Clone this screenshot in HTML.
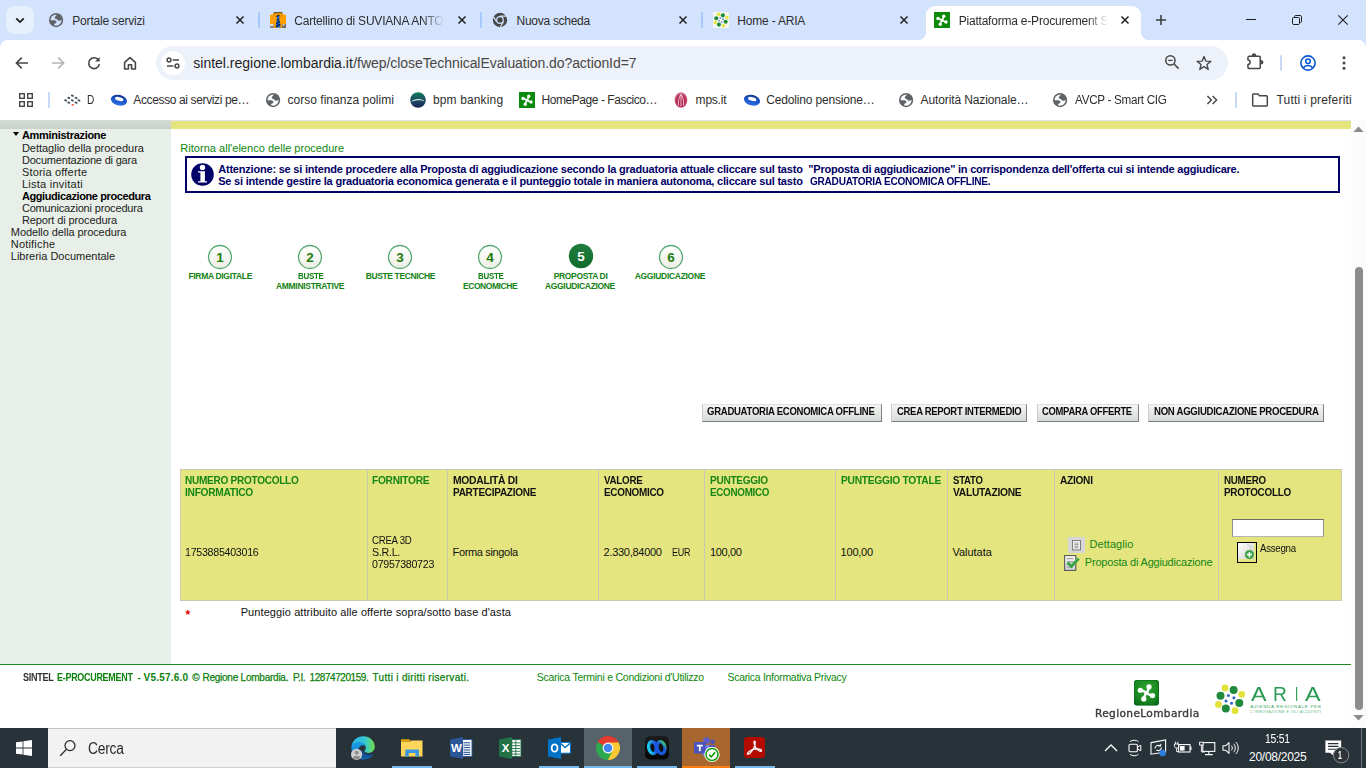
<!DOCTYPE html>
<html lang="it"><head><meta charset="utf-8"><title>Piattaforma e-Procurement Sintel</title>
<style>
html,body{margin:0;padding:0;width:1366px;height:768px;overflow:hidden;background:#fff;font-family:"Liberation Sans",sans-serif}
.a{position:absolute}
.t{position:absolute;white-space:nowrap;transform-origin:0 50%;height:20px}
svg{position:absolute;overflow:visible}
.sep{position:absolute;width:2px;height:16px;background:#a8c7fa;border-radius:1px}
.btn{position:absolute;top:404px;height:16px;background:linear-gradient(#f4f5f4,#d6dbd6);border:1px solid;border-color:#dedede #7e7e7e #7e7e7e #cbcbcb;box-shadow:0 0 0 0 #000}
.vl{position:absolute;top:470px;width:1px;height:130px;background:#c9c9b4}
.ul{position:absolute;top:766px;height:2px;background:#76b9ed}
</style></head><body>
<!-- ================= CHROME FRAME ================= -->
<div class="a" style="left:0;top:0;width:1366px;height:50px;background:#d3e3fd"></div>
<div class="a" style="left:6px;top:6px;width:28px;height:28px;border-radius:9px;background:#e7effd"></div>
<div class="sep" style="left:258px;top:12px"></div>
<div class="sep" style="left:480px;top:12px"></div>
<div class="sep" style="left:701px;top:12px"></div>
<!-- active tab -->
<div class="a" style="left:926px;top:6px;width:215px;height:36px;background:#fff;border-radius:9px 9px 0 0"></div>
<div class="a" style="left:918px;top:32px;width:8px;height:8px;background:radial-gradient(circle at 0 0,rgba(255,255,255,0) 7.5px,#fff 8.5px)"></div>
<div class="a" style="left:1141px;top:32px;width:8px;height:8px;background:radial-gradient(circle at 100% 0,rgba(255,255,255,0) 7.5px,#fff 8.5px)"></div>
<!-- toolbar -->
<div class="a" style="left:0;top:40px;width:1366px;height:80px;background:#fff;border-radius:8px 8px 0 0"></div>
<div class="a" style="left:156px;top:46px;width:1072px;height:34px;border-radius:17px;background:#edf2fa"></div>
<div class="a" style="left:161px;top:51px;width:24px;height:24px;border-radius:12px;background:#fff"></div>
<div class="a" style="left:1280px;top:55px;width:2px;height:16px;background:#c7d9f7;border-radius:1px"></div>
<div class="a" style="left:48px;top:92px;width:2px;height:16px;background:#c7d9f7;border-radius:1px"></div>
<div class="a" style="left:1235px;top:92px;width:2px;height:16px;background:#c7d9f7;border-radius:1px"></div>

<svg style="left:14px;top:14px" width="12" height="12" viewBox="0 0 12 12"><path d="M2.2 4.3L6 8.1L9.8 4.3" stroke="#1f1f1f" stroke-width="1.8" fill="none"/></svg>
<svg style="left:48.9px;top:12.9px" width="14.2" height="14.2" viewBox="0 0 14.2 14.2"><circle cx="7.1" cy="7.1" r="7.1" fill="#5f6368"/><circle cx="7.1" cy="7.1" r="5.55" fill="#d3e3fd"/><path d="M8.3 1.2L6.1 4.1Q5.7 5.2 6.6 5.5L8 5.9Q8.6 7.2 9.4 7.4L10.8 7.6Q11.8 7.4 12.3 6.6L13.4 7.1A6.3 6.3 0 0 0 8.3 1.2z" fill="#5f6368" stroke="#5f6368" stroke-width=".5" stroke-linejoin="round"/><path d="M0.9 7.5L5.6 7.4Q6.8 7.7 7.2 8.6Q7.6 9.6 6.6 10L5.4 10.4Q4.9 11 4.9 12L4.4 13A6.3 6.3 0 0 1 0.9 7.5z" fill="#5f6368" stroke="#5f6368" stroke-width=".5" stroke-linejoin="round"/></svg>
<svg style="left:235px;top:15px" width="10" height="10" viewBox="0 0 10 10"><path d="M1.5 1.5L8.5 8.5M8.5 1.5L1.5 8.5" stroke="#1f1f1f" stroke-width="1.45" fill="none"/></svg>
<svg style="left:457px;top:15px" width="10" height="10" viewBox="0 0 10 10"><path d="M1.5 1.5L8.5 8.5M8.5 1.5L1.5 8.5" stroke="#1f1f1f" stroke-width="1.45" fill="none"/></svg>
<svg style="left:678px;top:15px" width="10" height="10" viewBox="0 0 10 10"><path d="M1.5 1.5L8.5 8.5M8.5 1.5L1.5 8.5" stroke="#1f1f1f" stroke-width="1.45" fill="none"/></svg>
<svg style="left:899px;top:15px" width="10" height="10" viewBox="0 0 10 10"><path d="M1.5 1.5L8.5 8.5M8.5 1.5L1.5 8.5" stroke="#1f1f1f" stroke-width="1.45" fill="none"/></svg>
<svg style="left:1120px;top:15px" width="10" height="10" viewBox="0 0 10 10"><path d="M1.5 1.5L8.5 8.5M8.5 1.5L1.5 8.5" stroke="#1f1f1f" stroke-width="1.45" fill="none"/></svg>
<svg style="left:270px;top:12px" width="16" height="16" viewBox="0 0 16 16"><path d="M4 0.3h8l1.2 1.9L16 3v13H0V3l2.8-.8z" fill="#ffa000"/><path d="M4 0.2h8l.6 1H3.4z" fill="#3c3c3c"/><path d="M8 2.6L9.6 4.4L9 6l1.6 9.6H5.6L7 6L6.4 4.4z" fill="#0a6cf0"/><path d="M6.6 4.6L9.4 3.2M6.8 8.4L9.3 6.6M6.2 11.6L9.9 9.2M5.8 14.8L10.4 12" stroke="#101010" stroke-width="1.1"/><path d="M3.6 2.4L6.2 5M12.4 2.4L9.8 5" stroke="#b86a00" stroke-width=".8"/><path d="M3.8 12V16M12.2 12V16" stroke="#b86a00" stroke-width=".7"/><rect x="0" y="12" width="3.6" height="4" fill="#8a8a8a"/><rect x="0.2" y="12.2" width="3.2" height="1.5" fill="#fff"/><rect x="12.4" y="12" width="3.6" height="4" fill="#6a6a6a"/><rect x="12.6" y="12.2" width="2.2" height="1.3" fill="#ddd"/></svg>
<svg style="left:492px;top:12px" width="16" height="16" viewBox="0 0 16 16"><circle cx="8" cy="8" r="7.2" fill="#474747"/><circle cx="8" cy="8" r="3.9" fill="#d3e3fd"/><circle cx="8" cy="8" r="2.7" fill="#474747"/><path d="M8 4.1H14.4M4.6 9.9L1.5 4.6M11.4 9.9L8.2 15.2" stroke="#d3e3fd" stroke-width="1.1" fill="none"/></svg>
<svg style="left:713px;top:12px" width="16" height="16" viewBox="0 0 16 16"><rect width="16" height="16" fill="#f6f6ee"/><circle cx="5.55" cy="2.25" r="1.75" fill="#e6e640"/><circle cx="13.90" cy="5.45" r="1.75" fill="#e6e640"/><circle cx="2.25" cy="10.50" r="1.75" fill="#e6e640"/><circle cx="10.55" cy="13.65" r="1.75" fill="#e6e640"/><circle cx="9.85" cy="3.35" r="2.05" fill="#1f8a3c"/><circle cx="3.30" cy="6.20" r="2.05" fill="#1f8a3c"/><circle cx="12.70" cy="9.75" r="2.05" fill="#1f8a3c"/><circle cx="5.95" cy="12.60" r="2.05" fill="#1f8a3c"/><circle cx="7.25" cy="6.05" r=".8" fill="#2a62c8"/><circle cx="10.00" cy="7.15" r=".8" fill="#2a62c8"/><circle cx="6.05" cy="8.75" r=".8" fill="#2a62c8"/><circle cx="8.80" cy="9.95" r=".8" fill="#2a62c8"/></svg>
<svg style="left:934px;top:12px" width="16" height="16" viewBox="0 0 16 16"><rect width="16" height="16" fill="#0b8a0b"/><path d="M8.00 8.20Q9.38 6.52 9.73 4.21" stroke="#fff" stroke-width="1.58" fill="none"/><circle cx="9.73" cy="4.21" r="1.71" fill="#fff"/><path d="M8.00 8.20Q9.68 9.58 11.99 9.93" stroke="#fff" stroke-width="1.58" fill="none"/><circle cx="11.99" cy="9.93" r="1.71" fill="#fff"/><path d="M8.00 8.20Q6.62 9.88 6.27 12.19" stroke="#fff" stroke-width="1.58" fill="none"/><circle cx="6.27" cy="12.19" r="1.71" fill="#fff"/><path d="M8.00 8.20Q6.32 6.82 4.01 6.47" stroke="#fff" stroke-width="1.58" fill="none"/><circle cx="4.01" cy="6.47" r="1.71" fill="#fff"/><circle cx="8" cy="8.2" r="1.41" fill="#fff"/></svg>
<svg style="left:1155px;top:14px" width="12" height="12" viewBox="0 0 12 12"><path d="M6 0.9V11.1M0.9 6H11.1" stroke="#3c3c3c" stroke-width="1.55"/></svg>
<svg style="left:1246px;top:19px" width="10" height="2" viewBox="0 0 10 2"><rect x="0" y="0" width="10" height="1" fill="#1f1f1f"/></svg>
<svg style="left:1292px;top:15px" width="10" height="10" viewBox="0 0 10 10"><rect x="0.5" y="2.5" width="7" height="7" rx="1.2" fill="none" stroke="#1f1f1f" stroke-width="1"/><path d="M2.5 2.5V1.7A1.2 1.2 0 0 1 3.7 0.5H8.3A1.2 1.2 0 0 1 9.5 1.7V6.3A1.2 1.2 0 0 1 8.3 7.5H7.5" fill="none" stroke="#1f1f1f" stroke-width="1"/></svg>
<svg style="left:1338px;top:15px" width="10" height="10" viewBox="0 0 10 10"><path d="M0.3 0.3L9.7 9.7M9.7 0.3L0.3 9.7" stroke="#1f1f1f" stroke-width="1.1"/></svg>
<svg style="left:15.3px;top:56px" width="14" height="14" viewBox="0 0 14 14"><path d="M13 7H1.8M6.8 1.6L1.4 7L6.8 12.4" stroke="#474747" stroke-width="1.6" fill="none"/></svg>
<svg style="left:50.7px;top:56px" width="14" height="14" viewBox="0 0 14 14"><path d="M1 7H12.2M7.2 1.6L12.6 7L7.2 12.4" stroke="#b4b4b4" stroke-width="1.6" fill="none"/></svg>
<svg style="left:87px;top:56px" width="14" height="14" viewBox="0 0 14 14"><path d="M11.6 4.2A5.4 5.4 0 1 0 12.4 8.2" stroke="#474747" stroke-width="1.6" fill="none"/><path d="M12.6 1V5.6H8z" fill="#474747"/></svg>
<svg style="left:123px;top:56px" width="14" height="14" viewBox="0 0 14 14"><path d="M1.6 6.4L7 1.6L12.4 6.4V13H8.6V8.8H5.4V13H1.6z" stroke="#474747" stroke-width="1.6" fill="none" stroke-linejoin="round"/></svg>
<svg style="left:166px;top:57px" width="14" height="12" viewBox="0 0 14 12"><circle cx="3" cy="3" r="1.9" fill="none" stroke="#474747" stroke-width="1.5"/><path d="M6.6 3H13" stroke="#474747" stroke-width="1.5"/><circle cx="11" cy="9" r="1.9" fill="none" stroke="#474747" stroke-width="1.5"/><path d="M1 9H7.4" stroke="#474747" stroke-width="1.5"/></svg>
<svg style="left:1163.9px;top:53.9px" width="16" height="16" viewBox="0 0 16 16"><circle cx="6.4" cy="6.4" r="4.6" fill="none" stroke="#474747" stroke-width="1.5"/><path d="M9.8 9.8L14.6 14.6" stroke="#474747" stroke-width="1.6"/><path d="M4.2 6.4H8.6" stroke="#474747" stroke-width="1.3"/></svg>
<svg style="left:1196px;top:55px" width="16" height="16" viewBox="0 0 16 16"><polygon points="8.00,1.40 9.82,6.09 14.85,6.38 10.95,9.56 12.23,14.42 8.00,11.70 3.77,14.42 5.05,9.56 1.15,6.38 6.18,6.09" fill="none" stroke="#474747" stroke-width="1.4" stroke-linejoin="round"/></svg>
<svg style="left:1247px;top:53.2px" width="16" height="17" viewBox="0 0 16 17"><path d="M2.15 3.35H12.05A1.2 1.2 0 0 1 13.25 4.55V14.25A1.2 1.2 0 0 1 12.05 15.45H2.15A1.2 1.2 0 0 1 .95 14.25V11.45A2.2 2.2 0 0 0 .95 7.05V4.55A1.2 1.2 0 0 1 2.15 3.35z" fill="none" stroke="#474747" stroke-width="1.5" stroke-linejoin="round"/><path d="M4.7 3.2A2.3 2.9 0 0 1 9.3 3.2z" fill="#474747"/><path d="M13.6 7A2.7 2.25 0 0 1 13.6 11.5z" fill="#474747"/></svg>
<svg style="left:1300px;top:55px" width="16" height="16" viewBox="0 0 16 16"><circle cx="8" cy="8" r="7.1" fill="none" stroke="#0b57d0" stroke-width="1.6"/><circle cx="8" cy="6.3" r="2.3" fill="none" stroke="#0b57d0" stroke-width="1.5"/><path d="M3.4 12.9C4.6 10.9 6.2 10.4 8 10.4S11.4 10.9 12.6 12.9" fill="none" stroke="#0b57d0" stroke-width="1.5"/></svg>
<svg style="left:1342px;top:56px" width="4" height="14" viewBox="0 0 4 14"><circle cx="2" cy="1.8" r="1.5" fill="#474747"/><circle cx="2" cy="7" r="1.5" fill="#474747"/><circle cx="2" cy="12.2" r="1.5" fill="#474747"/></svg>
<svg style="left:19px;top:93px" width="14" height="14" viewBox="0 0 14 14"><rect x="0.7" y="0.7" width="4.6" height="4.6" fill="none" stroke="#474747" stroke-width="1.4"/><rect x="8.7" y="0.7" width="4.6" height="4.6" fill="none" stroke="#474747" stroke-width="1.4"/><rect x="0.7" y="8.7" width="4.6" height="4.6" fill="none" stroke="#474747" stroke-width="1.4"/><rect x="8.7" y="8.7" width="4.6" height="4.6" fill="none" stroke="#474747" stroke-width="1.4"/></svg>
<svg style="left:64px;top:92px" width="16" height="16" viewBox="0 0 16 16"><ellipse cx="8.4" cy="3.6000000000000005" rx="1.55" ry="1.05" transform="rotate(25 8.4 3.6000000000000005)" fill="#46525e"/><ellipse cx="4.8" cy="5.9" rx="1.55" ry="1.05" transform="rotate(25 4.8 5.9)" fill="#46525e"/><ellipse cx="12.1" cy="5.9" rx="1.55" ry="1.05" transform="rotate(25 12.1 5.9)" fill="#46525e"/><ellipse cx="1.5999999999999996" cy="8.4" rx="1.55" ry="1.05" transform="rotate(25 1.5999999999999996 8.4)" fill="#46525e"/><ellipse cx="8.4" cy="8.4" rx="1.55" ry="1.05" transform="rotate(25 8.4 8.4)" fill="#46525e"/><ellipse cx="15" cy="8.4" rx="1.55" ry="1.05" transform="rotate(25 15 8.4)" fill="#46525e"/><ellipse cx="4.8" cy="10.600000000000001" rx="1.55" ry="1.05" transform="rotate(25 4.8 10.600000000000001)" fill="#46525e"/><ellipse cx="12.1" cy="10.600000000000001" rx="1.55" ry="1.05" transform="rotate(25 12.1 10.600000000000001)" fill="#46525e"/><ellipse cx="8.7" cy="12.8" rx="1.3" ry=".9" fill="#f0562c"/></svg>
<svg style="left:111px;top:92px" width="16" height="16" viewBox="0 0 16 16"><defs><linearGradient id="bkb111" x1="0" y1="0" x2="0" y2="1"><stop offset="0" stop-color="#0b2f86"/><stop offset=".45" stop-color="#1a55cc"/><stop offset="1" stop-color="#2f6ee0"/></linearGradient></defs><g transform="rotate(14 8 8)"><ellipse cx="8" cy="8.2" rx="8.3" ry="5.3" fill="url(#bkb111)"/><ellipse cx="8" cy="7" rx="4.3" ry="1.9" fill="#fff"/></g></svg>
<svg style="left:266.0px;top:92.9px" width="14.2" height="14.2" viewBox="0 0 14.2 14.2"><circle cx="7.1" cy="7.1" r="7.1" fill="#5f6368"/><circle cx="7.1" cy="7.1" r="5.55" fill="#fff"/><path d="M8.3 1.2L6.1 4.1Q5.7 5.2 6.6 5.5L8 5.9Q8.6 7.2 9.4 7.4L10.8 7.6Q11.8 7.4 12.3 6.6L13.4 7.1A6.3 6.3 0 0 0 8.3 1.2z" fill="#5f6368" stroke="#5f6368" stroke-width=".5" stroke-linejoin="round"/><path d="M0.9 7.5L5.6 7.4Q6.8 7.7 7.2 8.6Q7.6 9.6 6.6 10L5.4 10.4Q4.9 11 4.9 12L4.4 13A6.3 6.3 0 0 1 0.9 7.5z" fill="#5f6368" stroke="#5f6368" stroke-width=".5" stroke-linejoin="round"/></svg>
<svg style="left:410px;top:92px" width="16" height="16" viewBox="0 0 16 16"><defs><linearGradient id="bpmg" x1="0" y1="0" x2="0" y2="1"><stop offset="0" stop-color="#0e7a5a"/><stop offset=".55" stop-color="#1c4a63"/><stop offset="1" stop-color="#1b2458"/></linearGradient></defs><circle cx="8" cy="8" r="7.8" fill="url(#bpmg)"/><path d="M1.2 9.8C4.5 6.2 11 6 14.8 9.4C11 7.6 5 8 1.2 9.8z" fill="#e8f2f0"/></svg>
<svg style="left:519px;top:92px" width="16" height="16" viewBox="0 0 16 16"><rect width="16" height="16" fill="#0b8a0b"/><path d="M8.00 8.20Q9.38 6.52 9.73 4.21" stroke="#fff" stroke-width="1.58" fill="none"/><circle cx="9.73" cy="4.21" r="1.71" fill="#fff"/><path d="M8.00 8.20Q9.68 9.58 11.99 9.93" stroke="#fff" stroke-width="1.58" fill="none"/><circle cx="11.99" cy="9.93" r="1.71" fill="#fff"/><path d="M8.00 8.20Q6.62 9.88 6.27 12.19" stroke="#fff" stroke-width="1.58" fill="none"/><circle cx="6.27" cy="12.19" r="1.71" fill="#fff"/><path d="M8.00 8.20Q6.32 6.82 4.01 6.47" stroke="#fff" stroke-width="1.58" fill="none"/><circle cx="4.01" cy="6.47" r="1.71" fill="#fff"/><circle cx="8" cy="8.2" r="1.41" fill="#fff"/></svg>
<svg style="left:674px;top:92px" width="14" height="16" viewBox="0 0 14 16"><defs><radialGradient id="mpsg" cx=".5" cy=".55" r=".6"><stop offset="0" stop-color="#a81840"/><stop offset=".6" stop-color="#b8305a"/><stop offset="1" stop-color="#dc98ac"/></radialGradient></defs><ellipse cx="7" cy="8" rx="6.4" ry="7.7" fill="url(#mpsg)"/><path d="M7 2.2V14M4.4 13.4C4.2 9 5 5 7 2.4C9 5 9.8 9 9.6 13.4" stroke="#f3d3dc" stroke-width=".9" fill="none"/></svg>
<svg style="left:744px;top:92px" width="16" height="16" viewBox="0 0 16 16"><defs><linearGradient id="bkb744" x1="0" y1="0" x2="0" y2="1"><stop offset="0" stop-color="#0b2f86"/><stop offset=".45" stop-color="#1a55cc"/><stop offset="1" stop-color="#2f6ee0"/></linearGradient></defs><g transform="rotate(14 8 8)"><ellipse cx="8" cy="8.2" rx="8.3" ry="5.3" fill="url(#bkb744)"/><ellipse cx="8" cy="7" rx="4.3" ry="1.9" fill="#fff"/></g></svg>
<svg style="left:899.0px;top:92.9px" width="14.2" height="14.2" viewBox="0 0 14.2 14.2"><circle cx="7.1" cy="7.1" r="7.1" fill="#5f6368"/><circle cx="7.1" cy="7.1" r="5.55" fill="#fff"/><path d="M8.3 1.2L6.1 4.1Q5.7 5.2 6.6 5.5L8 5.9Q8.6 7.2 9.4 7.4L10.8 7.6Q11.8 7.4 12.3 6.6L13.4 7.1A6.3 6.3 0 0 0 8.3 1.2z" fill="#5f6368" stroke="#5f6368" stroke-width=".5" stroke-linejoin="round"/><path d="M0.9 7.5L5.6 7.4Q6.8 7.7 7.2 8.6Q7.6 9.6 6.6 10L5.4 10.4Q4.9 11 4.9 12L4.4 13A6.3 6.3 0 0 1 0.9 7.5z" fill="#5f6368" stroke="#5f6368" stroke-width=".5" stroke-linejoin="round"/></svg>
<svg style="left:1052.9px;top:92.9px" width="14.2" height="14.2" viewBox="0 0 14.2 14.2"><circle cx="7.1" cy="7.1" r="7.1" fill="#5f6368"/><circle cx="7.1" cy="7.1" r="5.55" fill="#fff"/><path d="M8.3 1.2L6.1 4.1Q5.7 5.2 6.6 5.5L8 5.9Q8.6 7.2 9.4 7.4L10.8 7.6Q11.8 7.4 12.3 6.6L13.4 7.1A6.3 6.3 0 0 0 8.3 1.2z" fill="#5f6368" stroke="#5f6368" stroke-width=".5" stroke-linejoin="round"/><path d="M0.9 7.5L5.6 7.4Q6.8 7.7 7.2 8.6Q7.6 9.6 6.6 10L5.4 10.4Q4.9 11 4.9 12L4.4 13A6.3 6.3 0 0 1 0.9 7.5z" fill="#5f6368" stroke="#5f6368" stroke-width=".5" stroke-linejoin="round"/></svg>
<svg style="left:1206px;top:95px" width="12" height="10" viewBox="0 0 12 10"><path d="M1.4 1L5.4 5L1.4 9M6.6 1L10.6 5L6.6 9" stroke="#474747" stroke-width="1.5" fill="none"/></svg>
<svg style="left:1252px;top:93px" width="16" height="14" viewBox="0 0 16 14"><path d="M1.6 0.9H6L7.6 2.7H14.4A1.1 1.1 0 0 1 15.3 3.7V12A1.1 1.1 0 0 1 14.4 13.1H1.6A1.1 1.1 0 0 1 .7 12V1.9A1.1 1.1 0 0 1 1.6 .9z" fill="none" stroke="#474747" stroke-width="1.5" stroke-linejoin="round"/></svg>
<!-- ================= PAGE ================= -->
<div class="a" style="left:0;top:120px;width:171px;height:544px;background:#e8efe8"></div>
<div class="a" style="left:0;top:120px;width:171px;height:9px;background:linear-gradient(#d4dbd4,#c9d1c9)"></div>
<div class="a" style="left:171px;top:121px;width:1180px;height:8px;background:#e4e57f"></div>
<div class="a" style="left:171px;top:120px;width:1195px;height:1px;background:#e3e3ec"></div>
<!-- scrollbar -->
<div class="a" style="left:1351px;top:120px;width:15px;height:608px;background:#fcfcfc"></div>
<div class="a" style="left:1354.5px;top:267px;width:8.5px;height:443px;border-radius:4.5px;background:#8c8c8c"></div>
<svg style="left:1353px;top:126px" width="11" height="6" viewBox="0 0 11 6"><path d="M0.3 6 L5.5 0.6 L10.7 6Z" fill="#8b8b8b"/></svg>
<svg style="left:1353px;top:715px" width="11" height="6" viewBox="0 0 11 6"><path d="M0.3 0 L5.5 5.4 L10.7 0Z" fill="#8b8b8b"/></svg>
<!-- info box -->
<div class="a" style="left:185px;top:156px;width:1151px;height:33px;border:2px solid #000066;background:#fff"></div>
<!-- stepper -->
<svg style="left:207.3px;top:244.3px" width="26" height="26" viewBox="0 0 26 26"><defs><linearGradient id="stw1" x1="0" y1="0" x2="0" y2="1"><stop offset="0" stop-color="#ffffff"/><stop offset="1" stop-color="#eeeee6"/></linearGradient></defs><circle cx="13" cy="13" r="11.5" fill="url(#stw1)" stroke="#55a870" stroke-width="1.3"/><text x="13" y="17.8" text-anchor="middle" font-family="Liberation Sans, sans-serif" font-weight="700" font-size="13.5" fill="#1c7c0c">1</text></svg>
<svg style="left:297.36px;top:244.3px" width="26" height="26" viewBox="0 0 26 26"><defs><linearGradient id="stw2" x1="0" y1="0" x2="0" y2="1"><stop offset="0" stop-color="#ffffff"/><stop offset="1" stop-color="#eeeee6"/></linearGradient></defs><circle cx="13" cy="13" r="11.5" fill="url(#stw2)" stroke="#55a870" stroke-width="1.3"/><text x="13" y="17.8" text-anchor="middle" font-family="Liberation Sans, sans-serif" font-weight="700" font-size="13.5" fill="#1c7c0c">2</text></svg>
<svg style="left:387.42px;top:244.3px" width="26" height="26" viewBox="0 0 26 26"><defs><linearGradient id="stw3" x1="0" y1="0" x2="0" y2="1"><stop offset="0" stop-color="#ffffff"/><stop offset="1" stop-color="#eeeee6"/></linearGradient></defs><circle cx="13" cy="13" r="11.5" fill="url(#stw3)" stroke="#55a870" stroke-width="1.3"/><text x="13" y="17.8" text-anchor="middle" font-family="Liberation Sans, sans-serif" font-weight="700" font-size="13.5" fill="#1c7c0c">3</text></svg>
<svg style="left:477.48px;top:244.3px" width="26" height="26" viewBox="0 0 26 26"><defs><linearGradient id="stw4" x1="0" y1="0" x2="0" y2="1"><stop offset="0" stop-color="#ffffff"/><stop offset="1" stop-color="#eeeee6"/></linearGradient></defs><circle cx="13" cy="13" r="11.5" fill="url(#stw4)" stroke="#55a870" stroke-width="1.3"/><text x="13" y="17.8" text-anchor="middle" font-family="Liberation Sans, sans-serif" font-weight="700" font-size="13.5" fill="#1c7c0c">4</text></svg>
<svg style="left:567.54px;top:242.8px" width="26" height="26" viewBox="0 0 26 26"><defs><linearGradient id="stg" x1="0" y1="0" x2="0" y2="1"><stop offset="0" stop-color="#1f7f3f"/><stop offset="1" stop-color="#0f6a2c"/></linearGradient></defs><circle cx="13" cy="13" r="12.2" fill="url(#stg)"/><text x="13" y="17.8" text-anchor="middle" font-family="Liberation Sans, sans-serif" font-weight="700" font-size="13.5" fill="#fff">5</text></svg>
<svg style="left:657.6px;top:244.3px" width="26" height="26" viewBox="0 0 26 26"><defs><linearGradient id="stw6" x1="0" y1="0" x2="0" y2="1"><stop offset="0" stop-color="#ffffff"/><stop offset="1" stop-color="#eeeee6"/></linearGradient></defs><circle cx="13" cy="13" r="11.5" fill="url(#stw6)" stroke="#55a870" stroke-width="1.3"/><text x="13" y="17.8" text-anchor="middle" font-family="Liberation Sans, sans-serif" font-weight="700" font-size="13.5" fill="#1c7c0c">6</text></svg>
<!-- buttons -->
<div class="btn" style="left:702px;width:178px"></div>
<div class="btn" style="left:891px;width:134px"></div>
<div class="btn" style="left:1037px;width:100px"></div>
<div class="btn" style="left:1148px;width:174px"></div>
<!-- table -->
<div class="a" style="left:180px;top:469px;width:1160px;height:130px;background:#e4e57f;border:1px solid #c9c9b4"></div>
<div class="vl" style="left:367px"></div><div class="vl" style="left:447px"></div><div class="vl" style="left:598px"></div>
<div class="vl" style="left:704px"></div><div class="vl" style="left:835px"></div><div class="vl" style="left:947px"></div>
<div class="vl" style="left:1054px"></div><div class="vl" style="left:1218px"></div>
<div class="a" style="left:1232px;top:519px;width:90px;height:16px;background:#fff;border:1px solid;border-color:#6e6e6e #8f8f8f #b5b5b5 #8f8f8f"></div>
<svg style="left:13px;top:132.3px" width="6" height="4" viewBox="0 0 6 4"><path d="M0 0H6L3 4z" fill="#000"/></svg>
<svg style="left:191.0px;top:162.5px" width="23" height="23" viewBox="0 0 23 23"><circle cx="11.5" cy="11.5" r="11.3" fill="#000066"/><circle cx="11.5" cy="4.4" r="2.7" fill="#fff"/><path d="M7 8.2H13.9V18.2H16V19.6H7V18.2H9.4V9.6H7z" fill="#fff"/></svg>
<svg style="left:1068px;top:537px" width="17" height="16" viewBox="0 0 17 16"><rect width="17" height="16" fill="#d6d6d6"/><rect x="4.5" y="3.5" width="8" height="9.4" fill="#f4f4f4" stroke="#7c7c7c" stroke-width="1"/><path d="M6.4 6H10.6M6.4 7.6H10.6M6.4 9.2H10.6M6.4 10.8H10.6" stroke="#8e8e8e" stroke-width=".9"/></svg>
<svg style="left:1064px;top:555px" width="16" height="16" viewBox="0 0 16 16"><defs><linearGradient id="dcg" x1="0" y1="0" x2="0" y2="1"><stop offset="0" stop-color="#fdfdfd"/><stop offset="1" stop-color="#cfcfcf"/></linearGradient></defs><rect x="0.6" y="0.6" width="11.2" height="14.8" fill="url(#dcg)" stroke="#5a5a5a" stroke-width="1.1"/><path d="M2.6 3.6H9.6M2.6 6.6H9.6M2.6 9.4H7M2.6 12H9" stroke="#a8a8a8" stroke-width="1.3"/><path d="M3.6 7.6L7.4 11.2L14.6 3.4" stroke="#2f9e3f" stroke-width="3" fill="none"/><path d="M4 7.2L7.4 10.2L13.8 3.2" stroke="#5fc06a" stroke-width=".9" fill="none"/></svg>
<svg style="left:1237px;top:542px" width="20" height="21" viewBox="0 0 20 21"><defs><linearGradient id="asg" x1="0" y1="0" x2="1" y2="1"><stop offset="0" stop-color="#ffffff"/><stop offset="1" stop-color="#cfcfcf"/></linearGradient></defs><rect x="0.5" y="0.5" width="19" height="20" fill="#e4e57f" stroke="#000" stroke-width="1"/><rect x="1" y="1" width="16" height="16" fill="url(#asg)"/><path d="M10 2.4H11.6L13.6 4.4V8" stroke="#c2c2c2" stroke-width=".8" fill="none"/><circle cx="12.4" cy="12.6" r="4.1" fill="#3aa742"/><circle cx="12.4" cy="12.6" r="4.1" fill="none" stroke="#2b8a35" stroke-width=".6"/><path d="M12.4 10V15.2M9.8 12.6H15" stroke="#fff" stroke-width="1.5"/></svg>
<svg style="left:1134px;top:680.4px" width="25" height="25" viewBox="0 0 25 25"><defs><radialGradient id="llg" cx=".5" cy=".35" r=".75"><stop offset="0" stop-color="#2fa32f"/><stop offset=".6" stop-color="#1a8a22"/><stop offset="1" stop-color="#0a6a1a"/></radialGradient></defs><rect width="25" height="25.4" rx="2.6" fill="url(#llg)"/><rect x=".5" y=".5" width="24" height="24.4" rx="2.2" fill="none" stroke="#0a6a1a" stroke-opacity=".55" stroke-width="1"/><path d="M12.40 12.90Q14.51 10.34 15.04 6.82" stroke="#fff" stroke-width="2.40" fill="none"/><circle cx="15.04" cy="6.82" r="2.61" fill="#fff"/><path d="M12.40 12.90Q14.96 15.01 18.48 15.54" stroke="#fff" stroke-width="2.40" fill="none"/><circle cx="18.48" cy="15.54" r="2.61" fill="#fff"/><path d="M12.40 12.90Q10.29 15.46 9.76 18.98" stroke="#fff" stroke-width="2.40" fill="none"/><circle cx="9.76" cy="18.98" r="2.61" fill="#fff"/><path d="M12.40 12.90Q9.84 10.79 6.32 10.26" stroke="#fff" stroke-width="2.40" fill="none"/><circle cx="6.32" cy="10.26" r="2.61" fill="#fff"/><circle cx="12.4" cy="12.9" r="2.15" fill="#fff"/></svg>
<svg style="left:1212px;top:682px" width="36" height="34" viewBox="0 0 36 34"><circle cx="13.0" cy="5.9" r="3.4" fill="#e2e23a"/><circle cx="29.7" cy="12.3" r="3.4" fill="#e2e23a"/><circle cx="6.4" cy="22.4" r="3.4" fill="#e2e23a"/><circle cx="23.0" cy="28.7" r="3.4" fill="#e2e23a"/><circle cx="21.6" cy="8.1" r="4" fill="#1f8a3c"/><circle cx="8.5" cy="13.8" r="4" fill="#1f8a3c"/><circle cx="27.3" cy="20.9" r="4" fill="#1f8a3c"/><circle cx="13.8" cy="26.6" r="4" fill="#1f8a3c"/><circle cx="16.4" cy="13.5" r="1.5" fill="#2a62c8"/><circle cx="21.9" cy="15.7" r="1.5" fill="#2a62c8"/><circle cx="14.0" cy="18.9" r="1.5" fill="#2a62c8"/><circle cx="19.5" cy="21.3" r="1.5" fill="#2a62c8"/></svg>
<!-- footer -->
<div class="a" style="left:0;top:664px;width:1351px;height:1px;background:#1d8a1d"></div>
<!-- ================= TASKBAR ================= -->
<div class="a" style="left:0;top:728px;width:1366px;height:40px;background:#273239"></div>
<div class="a" style="left:48px;top:728px;width:288px;height:40px;background:#f2f2f2;box-sizing:border-box;border-top:1px solid #c4c4c4;border-bottom:1px solid #cfcfcf"></div>
<div class="a" style="left:584px;top:728px;width:48px;height:40px;background:#56636a"></div>
<div class="a" style="left:682px;top:728px;width:48px;height:40px;background:#a7672f"></div>
<div class="ul" style="left:392px;width:40px"></div>
<div class="ul" style="left:539px;width:40px"></div>
<div class="ul" style="left:584px;width:48px"></div>
<div class="ul" style="left:637px;width:40px"></div>
<div class="ul" style="left:682px;width:48px;background:#ff7f0e"></div>
<div class="ul" style="left:735px;width:40px"></div>
<div class="a" style="left:1361px;top:728px;width:1px;height:40px;background:#6a747a"></div>
<svg style="left:16px;top:740px" width="16" height="16" viewBox="0 0 16 16"><path d="M0 2.3L6.6 1.4V7.6H0zM7.4 1.3L16 0V7.6H7.4zM0 8.4H6.6V14.6L0 13.7zM7.4 8.4H16V16L7.4 14.7z" fill="#fff"/></svg>
<svg style="left:59px;top:738.6px" width="18" height="18" viewBox="0 0 18 18"><circle cx="11" cy="6.6" r="5" fill="none" stroke="#222" stroke-width="1.2"/><path d="M7.4 10.4L1.2 16.8" stroke="#222" stroke-width="1.3"/></svg>
<svg style="left:351px;top:735.6px" width="24" height="24" viewBox="0 0 24 24"><defs><linearGradient id="eg1" x1="0" y1="0" x2="1" y2="0"><stop offset="0" stop-color="#29b6f0"/><stop offset=".6" stop-color="#37c8d0"/><stop offset="1" stop-color="#70e048"/></linearGradient><linearGradient id="eg2" x1="0" y1="0" x2="0" y2="1"><stop offset="0" stop-color="#1b9de2"/><stop offset="1" stop-color="#1377cf"/></linearGradient><linearGradient id="eg3" x1="0" y1="0" x2="1" y2="0"><stop offset="0" stop-color="#0c59a4"/><stop offset="1" stop-color="#114a8b"/></linearGradient></defs><path d="M0.4 11.2C0.9 4.8 6 0.2 12.2 0.2C19 0.2 23.8 5.2 23.8 10.6C23.8 14.6 20.8 17 17.6 17C15.2 17 13.6 16 13.6 15C13.6 14.2 14.8 13.6 14.8 11.6C14.8 9.4 12.6 7 9.2 7C5 7 1.2 9 0.4 11.2z" fill="url(#eg1)"/><path d="M0.4 11.6C0.6 8 4.4 6 8.6 6C11.6 6 14 7.8 14.6 10C12.4 8.6 8.6 9.4 7.6 12.8C6.6 16.6 9 21 14 23.2C7.2 24.6 0 19.4 0.4 11.6z" fill="url(#eg2)"/><path d="M7.4 13.6C7 17.6 10.6 21.6 15.4 21.6C18.6 21.6 21.4 20 22.6 17.4C22 17.2 20.4 19 16.8 18.6C13.6 18.2 12 16.6 12.6 15C10.8 15.4 8 15 7.4 13.6z" fill="url(#eg3)"/><path d="M14 23.3C17.8 23 21.2 20.6 22.6 17.4C20 20.6 15 21.4 11.6 19.8C12 21.4 12.8 22.6 14 23.3z" fill="#0f5fae"/><circle cx="5.6" cy="18.4" r="5.6" fill="#cfcfcf"/><circle cx="5.6" cy="16.6" r="2.1" fill="#8f8f8f"/><path d="M1.8 21.4C2.4 19.2 8.8 19.2 9.4 21.4C8.4 23 6.8 23.6 5.6 23.6S2.8 23 1.8 21.4z" fill="#8f8f8f"/></svg>
<svg style="left:400.95px;top:738.8000000000001px" width="21.5" height="18" viewBox="0 0 21.5 18"><path d="M0 0.2H8.6L9.8 2.8H0z" fill="#e5a50a"/><path d="M0 2.7H9.2L10.2 1.5H21.5V17.6H0z" fill="#ffd65c"/><path d="M4.2 17.6V11.4A1 1 0 0 1 5.2 10.4H17A1 1 0 0 1 18 11.4V17.6H14.4V14H7.8V17.6z" fill="#3c97de"/></svg>
<svg style="left:449.8px;top:736.7px" width="22.4" height="22" viewBox="0 0 22.4 22"><rect x="11" y="2.6" width="11" height="16.8" fill="#fff"/><rect x="13.4" y="5.2" width="6.8" height="1.1" fill="#2b579a"/><rect x="13.4" y="7.6" width="6.8" height="1.1" fill="#2b579a"/><rect x="13.4" y="10" width="6.8" height="1.1" fill="#2b579a"/><rect x="13.4" y="12.4" width="6.8" height="1.1" fill="#2b579a"/><rect x="13.4" y="14.8" width="6.8" height="1.1" fill="#2b579a"/><rect x="13.4" y="16.9" width="6.8" height="1.1" fill="#2b579a"/><rect x="11" y="2.6" width="11" height="16.8" fill="none" stroke="#2b579a" stroke-width=".9"/><path d="M0 2.4L13 0V22L0 19.6z" fill="#2b579a"/><text x="6.5" y="15.2" text-anchor="middle" font-family="Liberation Sans, sans-serif" font-weight="700" font-size="11.5" fill="#fff">W</text></svg>
<svg style="left:498.8px;top:736.7px" width="22.4" height="22" viewBox="0 0 22.4 22"><rect x="11" y="2.6" width="11" height="16.8" fill="#fff"/><rect x="12" y="5.4" width="9.4" height=".9" fill="#217346"/><rect x="12" y="8.2" width="9.4" height=".9" fill="#217346"/><rect x="12" y="11" width="9.4" height=".9" fill="#217346"/><rect x="12" y="13.8" width="9.4" height=".9" fill="#217346"/><rect x="12" y="16.6" width="9.4" height=".9" fill="#217346"/><rect x="16.4" y="3" width=".9" height="16" fill="#217346"/><rect x="13" y="3" width=".5" height="16" fill="#217346" opacity=".5"/><rect x="11" y="2.6" width="11" height="16.8" fill="none" stroke="#217346" stroke-width=".9"/><path d="M0 2.4L13 0V22L0 19.6z" fill="#217346"/><text x="6.5" y="15.2" text-anchor="middle" font-family="Liberation Sans, sans-serif" font-weight="700" font-size="11.5" fill="#fff">X</text></svg>
<svg style="left:547.8px;top:736.7px" width="22.4" height="22" viewBox="0 0 22.4 22"><rect x="12" y="5.4" width="10.4" height="10.8" fill="#fff" stroke="#0072c6" stroke-width="1"/><path d="M12.4 6.2L17.2 10.6L22 6.2" stroke="#0072c6" stroke-width="1.3" fill="none"/><path d="M0 2.4L13 0V22L0 19.6z" fill="#0072c6"/><ellipse cx="6.6" cy="11" rx="2.9" ry="3.7" fill="none" stroke="#fff" stroke-width="1.8"/></svg>
<svg style="left:596px;top:735.8px" width="24" height="24" viewBox="0 0 24 24"><path d="M12 12L1.78 6.10A11.8 11.8 0 0 1 22.22 6.10z" fill="#e33b2e"/><path d="M12 12L22.22 6.10A11.8 11.8 0 0 1 12.00 23.80z" fill="#fcc934"/><path d="M12 12L12.00 23.80A11.8 11.8 0 0 1 1.78 6.10z" fill="#2da94f"/><path d="M12 6.6H22.4A11.8 11.8 0 0 0 1.78 6.10L7.3 9.3A5.4 5.4 0 0 1 12 6.6z" fill="#e33b2e"/><path d="M16.68 14.7L12.00 23.80A11.8 11.8 0 0 0 22.4 6.6H12A5.4 5.4 0 0 1 16.68 14.7z" fill="#fcc934"/><path d="M7.32 14.7L1.78 6.10A11.8 11.8 0 0 0 12.00 23.80L16.68 14.7A5.4 5.4 0 0 1 7.32 14.7z" fill="#2da94f"/><circle cx="12" cy="12" r="5.4" fill="#fff"/><circle cx="12" cy="12" r="4.3" fill="#4285f4"/></svg>
<svg style="left:645px;top:735.9px" width="24" height="24" viewBox="0 0 24 24"><defs><linearGradient id="wx1" x1="0" y1="0" x2="1" y2="0"><stop offset="0" stop-color="#1ccdf2"/><stop offset="1" stop-color="#1a58e0"/></linearGradient><linearGradient id="wx2" x1="0" y1="1" x2="1" y2="0"><stop offset="0" stop-color="#1a58e0"/><stop offset=".6" stop-color="#1a58e0"/><stop offset="1" stop-color="#45dc62"/></linearGradient><linearGradient id="wxb" x1="0" y1="0" x2="0" y2="1"><stop offset="0" stop-color="#1c1c1e"/><stop offset="1" stop-color="#060607"/></linearGradient></defs><rect width="24" height="23.4" rx="5" fill="url(#wxb)"/><ellipse cx="7.6" cy="11.6" rx="3.9" ry="6" transform="rotate(-12 7.6 11.6)" fill="none" stroke="url(#wx1)" stroke-width="3.3"/><ellipse cx="16" cy="11.6" rx="3.9" ry="6" transform="rotate(-12 16 11.6)" fill="none" stroke="url(#wx2)" stroke-width="3.3"/><path d="M9.4 6.2C11 8 11.6 12 10.6 16.4" stroke="#1a58e0" stroke-width="3.3" fill="none"/></svg>
<svg style="left:692.4px;top:735.9px" width="27" height="27" viewBox="0 0 27 27"><circle cx="14.6" cy="4.6" r="3.4" fill="#5b5fc7"/><circle cx="20.6" cy="5.8" r="2.4" fill="#4f52b2"/><path d="M10 9H19.4V16.4A4.7 4.7 0 0 1 10 16.4z" fill="#7b83eb"/><path d="M17.4 9H23V14.4A3 3 0 0 1 17.4 15z" fill="#4f52b2"/><rect x="2" y="6" width="11.6" height="11.6" rx="1.2" fill="#4b53bc"/><path d="M4.8 8.8H10.8V10.4H8.7V15.2H6.9V10.4H4.8z" fill="#fff"/><circle cx="20" cy="18.4" r="7.7" fill="#fff"/><circle cx="20" cy="18.4" r="6" fill="#fff" stroke="#13a10e" stroke-width="1.5"/><path d="M17 18.6L19.2 20.8L23.2 16.4" stroke="#13a10e" stroke-width="1.6" fill="none"/></svg>
<svg style="left:744.2px;top:737.1px" width="21" height="21" viewBox="0 0 21 21"><rect width="21" height="21" rx="3.6" fill="#b30b00"/><path d="M3.4 16.4C4 14.4 8.2 12.6 10.4 12.2C13 11.8 16.4 12 17.4 13.2C18 14.2 16.4 14.6 15 13.8C12.4 12.2 10.4 8.6 10 5.6C9.8 4 11 3.6 11.2 5.2C11.6 8.4 8.8 13.8 6 16.2C4.6 17.4 3 17.6 3.4 16.4z" fill="none" stroke="#fff" stroke-width="1.3"/></svg>
<svg style="left:1104px;top:744px" width="14" height="8" viewBox="0 0 14 8"><path d="M1 7L7 1L13 7" stroke="#fff" stroke-width="1.3" fill="none"/></svg>
<svg style="left:1128.3px;top:739.3px" width="14" height="18" viewBox="0 0 14 18"><rect x="1" y="5.2" width="8.4" height="7.6" rx="1.4" fill="none" stroke="#fff" stroke-width="1.1"/><path d="M9.6 8L12.8 6.2V11.8L9.6 10z" fill="none" stroke="#fff" stroke-width="1"/><path d="M2 2.6C4 0.8 8.4 0.8 10.4 2.6M2 15.4C4 17.2 8.4 17.2 10.4 15.4" stroke="#fff" stroke-width="1" fill="none"/></svg>
<svg style="left:1150.3px;top:739.4px" width="18" height="18" viewBox="0 0 18 18"><path d="M1 3.6L15.6 1V13L1 15.2z" fill="none" stroke="#fff" stroke-width="1.1"/><path d="M5 9.6C5 6.8 8 5.4 10.2 6.8M11 4.8L10.4 7.2L8 6.8M11.4 8.4C11.4 11 8.6 12.4 6.4 11" stroke="#fff" stroke-width="1.1" fill="none"/><circle cx="12.6" cy="14" r="3.3" fill="#2f7de1"/></svg>
<svg style="left:1174.3px;top:741.4px" width="18" height="14" viewBox="0 0 18 14"><rect x="4.6" y="3.6" width="11.4" height="7.4" fill="none" stroke="#fff" stroke-width="1.1"/><rect x="16.2" y="5.6" width="1.3" height="3.4" fill="#fff"/><rect x="6" y="5" width="4.6" height="4.6" fill="#fff"/><path d="M1.4 0.6V3M3.8 0.6V3M0.4 3H4.8V5.2C4.8 6.4 3.8 7 2.6 7S0.4 6.4 0.4 5.2zM2.6 7V10.6H5" stroke="#fff" stroke-width=".9" fill="none"/></svg>
<svg style="left:1197.6px;top:740.3px" width="18" height="16" viewBox="0 0 18 16"><rect x="4.8" y="2.6" width="12" height="8.8" fill="none" stroke="#fff" stroke-width="1.1"/><path d="M10.8 11.4V14.4M7 14.6H14.8" stroke="#fff" stroke-width="1.1"/><rect x="1.6" y="2.2" width="3.6" height="2.8" fill="#273239" stroke="#fff" stroke-width=".9"/><path d="M3.4 5V12H7" stroke="#fff" stroke-width=".9" fill="none"/></svg>
<svg style="left:1222.2px;top:741.4px" width="18" height="14" viewBox="0 0 18 14"><path d="M1 4.8H3.6L7 1.6V12.4L3.6 9.2H1z" fill="none" stroke="#fff" stroke-width="1.05" stroke-linejoin="round"/><path d="M9.4 4.6C10.6 6 10.6 8 9.4 9.4M11.6 2.8C13.8 5.2 13.8 8.8 11.6 11.2M13.8 1C17 4.4 17 9.6 13.8 13" stroke="#fff" stroke-width="1" fill="none"/></svg>
<svg style="left:1324.6px;top:740px" width="26" height="24" viewBox="0 0 26 24"><path d="M0.4 0.4H16.2V12.8H8.4V15.6L4.9 12.8H0.4z" fill="#fff"/><path d="M3 3.6H13.4M3 6.4H13.4M3 9.2H13.4" stroke="#273239" stroke-width="1.1"/><circle cx="16.2" cy="15.2" r="7.7" fill="#2e3438" stroke="#878f94" stroke-width="1"/></svg>
<span class="t" style="left:72.30px;top:11.00px;font:400 12px/20px 'Liberation Sans', sans-serif;color:#2e2e2e;letter-spacing:-0.192px;">Portale servizi</span>
<span class="t" style="left:294.20px;top:11.00px;font:400 12px/20px 'Liberation Sans', sans-serif;color:#2e2e2e;letter-spacing:-0.200px;-webkit-mask-image:linear-gradient(to right,#000 86%,transparent 100%);mask-image:linear-gradient(to right,#000 86%,transparent 100%);">Cartellino di SUVIANA ANTO</span>
<span class="t" style="left:516.60px;top:11.00px;font:400 12px/20px 'Liberation Sans', sans-serif;color:#2e2e2e;letter-spacing:-0.286px;">Nuova scheda</span>
<span class="t" style="left:737.30px;top:11.00px;font:400 12px/20px 'Liberation Sans', sans-serif;color:#2e2e2e;letter-spacing:-0.198px;">Home - ARIA</span>
<span class="t" style="left:958.70px;top:11.00px;font:400 12px/20px 'Liberation Sans', sans-serif;color:#2e2e2e;letter-spacing:-0.211px;-webkit-mask-image:linear-gradient(to right,#000 86%,transparent 100%);mask-image:linear-gradient(to right,#000 86%,transparent 100%);">Piattaforma e-Procurement S</span>
<span class="t" style="left:193.30px;top:53.00px;font:400 14px/20px 'Liberation Sans', sans-serif;color:#1f1f1f;letter-spacing:-0.002px;">sintel.regione.lombardia.it</span>
<span class="t" style="left:353.30px;top:53.00px;font:400 14px/20px 'Liberation Sans', sans-serif;color:#474747;letter-spacing:-0.064px;">/fwep/closeTechnicalEvaluation.do?actionId=7</span>
<span class="t" style="left:86.70px;top:90.00px;font:400 12px/20px 'Liberation Sans', sans-serif;color:#2e2e2e;letter-spacing:0.000px;transform:scaleX(0.8444);">D</span>
<span class="t" style="left:133.30px;top:90.00px;font:400 12px/20px 'Liberation Sans', sans-serif;color:#2e2e2e;letter-spacing:-0.369px;">Accesso ai servizi pe…</span>
<span class="t" style="left:287.50px;top:90.00px;font:400 12px/20px 'Liberation Sans', sans-serif;color:#2e2e2e;letter-spacing:0.017px;">corso finanza polimi</span>
<span class="t" style="left:432.90px;top:90.00px;font:400 12px/20px 'Liberation Sans', sans-serif;color:#2e2e2e;letter-spacing:0.146px;">bpm banking</span>
<span class="t" style="left:541.50px;top:90.00px;font:400 12px/20px 'Liberation Sans', sans-serif;color:#2e2e2e;letter-spacing:-0.441px;">HomePage - Fascico…</span>
<span class="t" style="left:695.60px;top:90.00px;font:400 12px/20px 'Liberation Sans', sans-serif;color:#2e2e2e;letter-spacing:-0.214px;">mps.it</span>
<span class="t" style="left:766.30px;top:90.00px;font:400 12px/20px 'Liberation Sans', sans-serif;color:#2e2e2e;letter-spacing:-0.177px;">Cedolino pensione…</span>
<span class="t" style="left:920.60px;top:90.00px;font:400 12px/20px 'Liberation Sans', sans-serif;color:#2e2e2e;letter-spacing:-0.120px;">Autorità Nazionale…</span>
<span class="t" style="left:1074.70px;top:90.00px;font:400 12px/20px 'Liberation Sans', sans-serif;color:#2e2e2e;letter-spacing:-0.300px;transform:scaleX(0.9736);">AVCP - Smart CIG</span>
<span class="t" style="left:1276.50px;top:90.00px;font:400 12px/20px 'Liberation Sans', sans-serif;color:#2e2e2e;letter-spacing:0.183px;">Tutti i preferiti</span>
<span class="t" style="left:21.90px;top:125.00px;font:700 11px/20px 'Liberation Sans', sans-serif;color:#000;letter-spacing:-0.294px;">Amministrazione</span>
<span class="t" style="left:21.90px;top:138.00px;font:400 11px/20px 'Liberation Sans', sans-serif;color:#1c1c1c;letter-spacing:-0.012px;">Dettaglio della procedura</span>
<span class="t" style="left:21.90px;top:150.00px;font:400 11px/20px 'Liberation Sans', sans-serif;color:#1c1c1c;letter-spacing:-0.191px;">Documentazione di gara</span>
<span class="t" style="left:21.90px;top:162.00px;font:400 11px/20px 'Liberation Sans', sans-serif;color:#1c1c1c;letter-spacing:0.188px;">Storia offerte</span>
<span class="t" style="left:21.90px;top:174.00px;font:400 11px/20px 'Liberation Sans', sans-serif;color:#1c1c1c;letter-spacing:0.259px;">Lista invitati</span>
<span class="t" style="left:21.90px;top:186.00px;font:700 11px/20px 'Liberation Sans', sans-serif;color:#000;letter-spacing:-0.400px;">Aggiudicazione procedura</span>
<span class="t" style="left:21.90px;top:198.00px;font:400 11px/20px 'Liberation Sans', sans-serif;color:#1c1c1c;letter-spacing:-0.169px;">Comunicazioni procedura</span>
<span class="t" style="left:21.90px;top:210.00px;font:400 11px/20px 'Liberation Sans', sans-serif;color:#1c1c1c;letter-spacing:-0.111px;">Report di procedura</span>
<span class="t" style="left:10.80px;top:222.00px;font:400 11px/20px 'Liberation Sans', sans-serif;color:#1c1c1c;letter-spacing:-0.081px;">Modello della procedura</span>
<span class="t" style="left:10.80px;top:234.00px;font:400 11px/20px 'Liberation Sans', sans-serif;color:#1c1c1c;letter-spacing:0.190px;">Notifiche</span>
<span class="t" style="left:10.80px;top:246.00px;font:400 11px/20px 'Liberation Sans', sans-serif;color:#1c1c1c;letter-spacing:-0.012px;">Libreria Documentale</span>
<span class="t" style="left:180.30px;top:138.00px;font:400 11px/20px 'Liberation Sans', sans-serif;color:#0c880c;letter-spacing:0.027px;">Ritorna all'elenco delle procedure</span>
<span class="t" style="left:218.20px;top:159.00px;font:700 11px/20px 'Liberation Sans', sans-serif;color:#000066;letter-spacing:-0.203px;">Attenzione: se si intende procedere alla Proposta di aggiudicazione secondo la graduatoria attuale cliccare sul tasto</span>
<span class="t" style="left:808.30px;top:159.00px;font:700 11px/20px 'Liberation Sans', sans-serif;color:#000066;letter-spacing:-0.233px;">"Proposta di aggiudicazione" in corrispondenza dell'offerta cui si intende aggiudicare.</span>
<span class="t" style="left:218.20px;top:171.00px;font:700 11px/20px 'Liberation Sans', sans-serif;color:#000066;letter-spacing:-0.203px;">Se si intende gestire la graduatoria economica generata e il punteggio totale in maniera autonoma, cliccare sul tasto</span>
<span class="t" style="left:809.80px;top:171.00px;font:700 11px/20px 'Liberation Sans', sans-serif;color:#000066;letter-spacing:-0.300px;transform:scaleX(0.9180);">GRADUATORIA ECONOMICA OFFLINE.</span>
<span class="t" style="left:188.40px;top:266.00px;font:700 8.5px/20px 'Liberation Sans', sans-serif;color:#148214;letter-spacing:-0.311px;">FIRMA DIGITALE</span>
<span class="t" style="left:297.50px;top:266.00px;font:700 8.5px/20px 'Liberation Sans', sans-serif;color:#148214;letter-spacing:-0.300px;transform:scaleX(0.9378);">BUSTE</span>
<span class="t" style="left:276.00px;top:276.00px;font:700 8.5px/20px 'Liberation Sans', sans-serif;color:#148214;letter-spacing:-0.315px;">AMMINISTRATIVE</span>
<span class="t" style="left:365.70px;top:266.00px;font:700 8.5px/20px 'Liberation Sans', sans-serif;color:#148214;letter-spacing:-0.373px;">BUSTE TECNICHE</span>
<span class="t" style="left:477.50px;top:266.00px;font:700 8.5px/20px 'Liberation Sans', sans-serif;color:#148214;letter-spacing:-0.300px;transform:scaleX(0.9378);">BUSTE</span>
<span class="t" style="left:463.00px;top:276.00px;font:700 8.5px/20px 'Liberation Sans', sans-serif;color:#148214;letter-spacing:-0.443px;">ECONOMICHE</span>
<span class="t" style="left:553.80px;top:266.00px;font:700 8.5px/20px 'Liberation Sans', sans-serif;color:#148214;letter-spacing:-0.367px;">PROPOSTA DI</span>
<span class="t" style="left:545.00px;top:276.00px;font:700 8.5px/20px 'Liberation Sans', sans-serif;color:#148214;letter-spacing:-0.334px;">AGGIUDICAZIONE</span>
<span class="t" style="left:634.70px;top:266.00px;font:700 8.5px/20px 'Liberation Sans', sans-serif;color:#148214;letter-spacing:-0.296px;">AGGIUDICAZIONE</span>
<span class="t" style="left:707.40px;top:401.50px;font:700 10px/20px 'Liberation Sans', sans-serif;color:#0a0a0a;letter-spacing:-0.300px;transform:scaleX(0.9561);">GRADUATORIA ECONOMICA OFFLINE</span>
<span class="t" style="left:896.60px;top:401.50px;font:700 10px/20px 'Liberation Sans', sans-serif;color:#0a0a0a;letter-spacing:-0.300px;transform:scaleX(0.9466);">CREA REPORT INTERMEDIO</span>
<span class="t" style="left:1042.40px;top:401.50px;font:700 10px/20px 'Liberation Sans', sans-serif;color:#0a0a0a;letter-spacing:-0.300px;transform:scaleX(0.9410);">COMPARA OFFERTE</span>
<span class="t" style="left:1153.60px;top:401.50px;font:700 10px/20px 'Liberation Sans', sans-serif;color:#0a0a0a;letter-spacing:-0.300px;transform:scaleX(0.9611);">NON AGGIUDICAZIONE PROCEDURA</span>
<span class="t" style="left:185.40px;top:470.00px;font:700 11px/20px 'Liberation Sans', sans-serif;color:#168616;letter-spacing:-0.300px;transform:scaleX(0.9136);">NUMERO PROTOCOLLO</span>
<span class="t" style="left:185.40px;top:482.00px;font:700 11px/20px 'Liberation Sans', sans-serif;color:#168616;letter-spacing:-0.300px;transform:scaleX(0.9255);">INFORMATICO</span>
<span class="t" style="left:372.00px;top:470.00px;font:700 11px/20px 'Liberation Sans', sans-serif;color:#168616;letter-spacing:-0.300px;transform:scaleX(0.9250);">FORNITORE</span>
<span class="t" style="left:452.50px;top:470.00px;font:700 11px/20px 'Liberation Sans', sans-serif;color:#111;letter-spacing:-0.300px;transform:scaleX(0.9385);">MODALITÀ DI</span>
<span class="t" style="left:452.50px;top:482.00px;font:700 11px/20px 'Liberation Sans', sans-serif;color:#111;letter-spacing:-0.300px;transform:scaleX(0.9091);">PARTECIPAZIONE</span>
<span class="t" style="left:603.60px;top:470.00px;font:700 11px/20px 'Liberation Sans', sans-serif;color:#111;letter-spacing:-0.300px;transform:scaleX(0.8892);">VALORE</span>
<span class="t" style="left:603.60px;top:482.00px;font:700 11px/20px 'Liberation Sans', sans-serif;color:#111;letter-spacing:-0.300px;transform:scaleX(0.9001);">ECONOMICO</span>
<span class="t" style="left:709.90px;top:470.00px;font:700 11px/20px 'Liberation Sans', sans-serif;color:#168616;letter-spacing:-0.300px;transform:scaleX(0.9149);">PUNTEGGIO</span>
<span class="t" style="left:709.90px;top:482.00px;font:700 11px/20px 'Liberation Sans', sans-serif;color:#168616;letter-spacing:-0.300px;transform:scaleX(0.8927);">ECONOMICO</span>
<span class="t" style="left:840.60px;top:470.00px;font:700 11px/20px 'Liberation Sans', sans-serif;color:#168616;letter-spacing:-0.300px;transform:scaleX(0.9319);">PUNTEGGIO TOTALE</span>
<span class="t" style="left:952.50px;top:470.00px;font:700 11px/20px 'Liberation Sans', sans-serif;color:#111;letter-spacing:-0.300px;transform:scaleX(0.8735);">STATO</span>
<span class="t" style="left:952.50px;top:482.00px;font:700 11px/20px 'Liberation Sans', sans-serif;color:#111;letter-spacing:-0.300px;transform:scaleX(0.9324);">VALUTAZIONE</span>
<span class="t" style="left:1059.70px;top:470.00px;font:700 11px/20px 'Liberation Sans', sans-serif;color:#111;letter-spacing:-0.300px;transform:scaleX(0.9211);">AZIONI</span>
<span class="t" style="left:1223.50px;top:470.00px;font:700 11px/20px 'Liberation Sans', sans-serif;color:#111;letter-spacing:-0.300px;transform:scaleX(0.8885);">NUMERO</span>
<span class="t" style="left:1223.50px;top:482.00px;font:700 11px/20px 'Liberation Sans', sans-serif;color:#111;letter-spacing:-0.300px;transform:scaleX(0.8982);">PROTOCOLLO</span>
<span class="t" style="left:185.40px;top:542.00px;font:400 11px/20px 'Liberation Sans', sans-serif;color:#111;letter-spacing:-0.300px;transform:scaleX(0.9708);">1753885403016</span>
<span class="t" style="left:372.00px;top:530.00px;font:400 11px/20px 'Liberation Sans', sans-serif;color:#111;letter-spacing:-0.300px;transform:scaleX(0.8773);">CREA 3D</span>
<span class="t" style="left:372.00px;top:542.00px;font:400 11px/20px 'Liberation Sans', sans-serif;color:#111;letter-spacing:-0.300px;transform:scaleX(0.9721);">S.R.L.</span>
<span class="t" style="left:372.00px;top:554.00px;font:400 11px/20px 'Liberation Sans', sans-serif;color:#111;letter-spacing:-0.300px;transform:scaleX(0.9692);">07957380723</span>
<span class="t" style="left:452.50px;top:542.00px;font:400 11px/20px 'Liberation Sans', sans-serif;color:#111;letter-spacing:-0.340px;">Forma singola</span>
<span class="t" style="left:603.60px;top:542.00px;font:400 11px/20px 'Liberation Sans', sans-serif;color:#111;letter-spacing:-0.285px;">2.330,84000</span>
<span class="t" style="left:672.40px;top:542.00px;font:400 11px/20px 'Liberation Sans', sans-serif;color:#111;letter-spacing:-0.300px;transform:scaleX(0.8201);">EUR</span>
<span class="t" style="left:709.90px;top:542.00px;font:400 11px/20px 'Liberation Sans', sans-serif;color:#111;letter-spacing:-0.345px;">100,00</span>
<span class="t" style="left:840.60px;top:542.00px;font:400 11px/20px 'Liberation Sans', sans-serif;color:#111;letter-spacing:-0.225px;">100,00</span>
<span class="t" style="left:952.50px;top:542.00px;font:400 11px/20px 'Liberation Sans', sans-serif;color:#111;letter-spacing:-0.033px;">Valutata</span>
<span class="t" style="left:1089.50px;top:534.00px;font:400 11px/20px 'Liberation Sans', sans-serif;color:#168616;letter-spacing:0.063px;">Dettaglio</span>
<span class="t" style="left:1084.80px;top:552.00px;font:400 11px/20px 'Liberation Sans', sans-serif;color:#168616;letter-spacing:-0.200px;">Proposta di Aggiudicazione</span>
<span class="t" style="left:1260.40px;top:538.00px;font:400 11px/20px 'Liberation Sans', sans-serif;color:#111;letter-spacing:-0.300px;transform:scaleX(0.8809);">Assegna</span>
<span class="t" style="left:185.40px;top:605.00px;font:700 12px/20px 'Liberation Sans', sans-serif;color:#e00000;letter-spacing:0.000px;">*</span>
<span class="t" style="left:240.70px;top:602.00px;font:400 11px/20px 'Liberation Sans', sans-serif;color:#111;letter-spacing:0.085px;">Punteggio attribuito alle offerte sopra/sotto base d'asta</span>
<span class="t" style="left:22.60px;top:667.50px;font:700 10px/20px 'Liberation Sans', sans-serif;color:#333;letter-spacing:-0.300px;transform:scaleX(0.9073);">SINTEL</span>
<span class="t" style="left:56.90px;top:667.50px;font:700 10px/20px 'Liberation Sans', sans-serif;color:#0c800c;letter-spacing:-0.300px;transform:scaleX(0.8957);">E-PROCUREMENT</span>
<span class="t" style="left:137.60px;top:667.50px;font:700 10px/20px 'Liberation Sans', sans-serif;color:#0c800c;letter-spacing:0.000px;">-</span>
<span class="t" style="left:143.60px;top:667.50px;font:700 10px/20px 'Liberation Sans', sans-serif;color:#0c800c;letter-spacing:0.219px;">V5.57.6.0</span>
<span class="t" style="left:192.30px;top:667.50px;font:400 10px/20px 'Liberation Sans', sans-serif;color:#0c800c;letter-spacing:0.000px;-webkit-text-stroke:0.25px #0c800c;">©</span>
<span class="t" style="left:202.40px;top:667.50px;font:400 10px/20px 'Liberation Sans', sans-serif;color:#0c800c;letter-spacing:-0.234px;-webkit-text-stroke:0.25px #0c800c;">Regione Lombardia.</span>
<span class="t" style="left:293.00px;top:667.50px;font:400 10px/20px 'Liberation Sans', sans-serif;color:#0c800c;letter-spacing:-0.379px;-webkit-text-stroke:0.25px #0c800c;">P.I.</span>
<span class="t" style="left:309.50px;top:667.50px;font:400 10px/20px 'Liberation Sans', sans-serif;color:#0c800c;letter-spacing:-0.425px;-webkit-text-stroke:0.25px #0c800c;">12874720159.</span>
<span class="t" style="left:372.50px;top:667.50px;font:400 10px/20px 'Liberation Sans', sans-serif;color:#0c800c;letter-spacing:0.318px;-webkit-text-stroke:0.25px #0c800c;">Tutti i diritti riservati.</span>
<span class="t" style="left:536.70px;top:667.00px;font:400 10.5px/20px 'Liberation Sans', sans-serif;color:#0c880c;letter-spacing:-0.248px;">Scarica Termini e Condizioni d'Utilizzo</span>
<span class="t" style="left:727.50px;top:667.00px;font:400 10.5px/20px 'Liberation Sans', sans-serif;color:#0c880c;letter-spacing:-0.310px;">Scarica Informativa Privacy</span>
<span class="t" style="left:1094.80px;top:703.50px;font:400 9.6px/20px 'DejaVu Sans', 'Liberation Sans', sans-serif;color:#3c3c3c;letter-spacing:0.300px;transform:scaleX(1.1081);-webkit-text-stroke:0.35px #3c3c3c;">RegioneLombardia</span>
<span class="t" style="left:1250.70px;top:683.50px;font:400 20.8px/20px 'Liberation Sans', sans-serif;color:#2a9a52;letter-spacing:0.000px;transform:scaleX(1.1214);">A</span>
<span class="t" style="left:1273.08px;top:683.50px;font:400 20.8px/20px 'Liberation Sans', sans-serif;color:#2a9a52;letter-spacing:0.000px;transform:scaleX(0.9214);">R</span>
<span class="t" style="left:1295.43px;top:683.50px;font:400 20.8px/20px 'Liberation Sans', sans-serif;color:#2a9a52;letter-spacing:0.000px;transform:scaleX(0.5667);">I</span>
<span class="t" style="left:1305.00px;top:683.50px;font:400 20.8px/20px 'Liberation Sans', sans-serif;color:#2a9a52;letter-spacing:0.000px;transform:scaleX(1.1214);">A</span>
<span class="t" style="left:1250.50px;top:696.50px;font:400 4.4px/20px 'Liberation Sans', sans-serif;color:#3aa35c;letter-spacing:0.728px;">AZIENDA REGIONALE PER</span>
<span class="t" style="left:1250.50px;top:702.00px;font:400 3.8px/20px 'Liberation Sans', sans-serif;color:#5ab878;letter-spacing:0.448px;">L'INNOVAZIONE E GLI ACQUISTI</span>
<span class="t" style="left:88.40px;top:738.50px;font:400 16px/20px 'Liberation Sans', sans-serif;color:#2a2a2a;letter-spacing:-0.300px;transform:scaleX(0.8634);">Cerca</span>
<span class="t" style="left:1264.80px;top:729.00px;font:400 12px/20px 'Liberation Sans', sans-serif;color:#fff;letter-spacing:-0.300px;transform:scaleX(0.8643);">15:51</span>
<span class="t" style="left:1249.00px;top:747.00px;font:400 12px/20px 'Liberation Sans', sans-serif;color:#fff;letter-spacing:-0.265px;">20/08/2025</span>
<span class="t" style="left:1338.30px;top:745.00px;font:700 11.5px/20px 'Liberation Sans', sans-serif;color:#fff;letter-spacing:0.000px;transform:scaleX(0.6000);">1</span>
</body></html>
